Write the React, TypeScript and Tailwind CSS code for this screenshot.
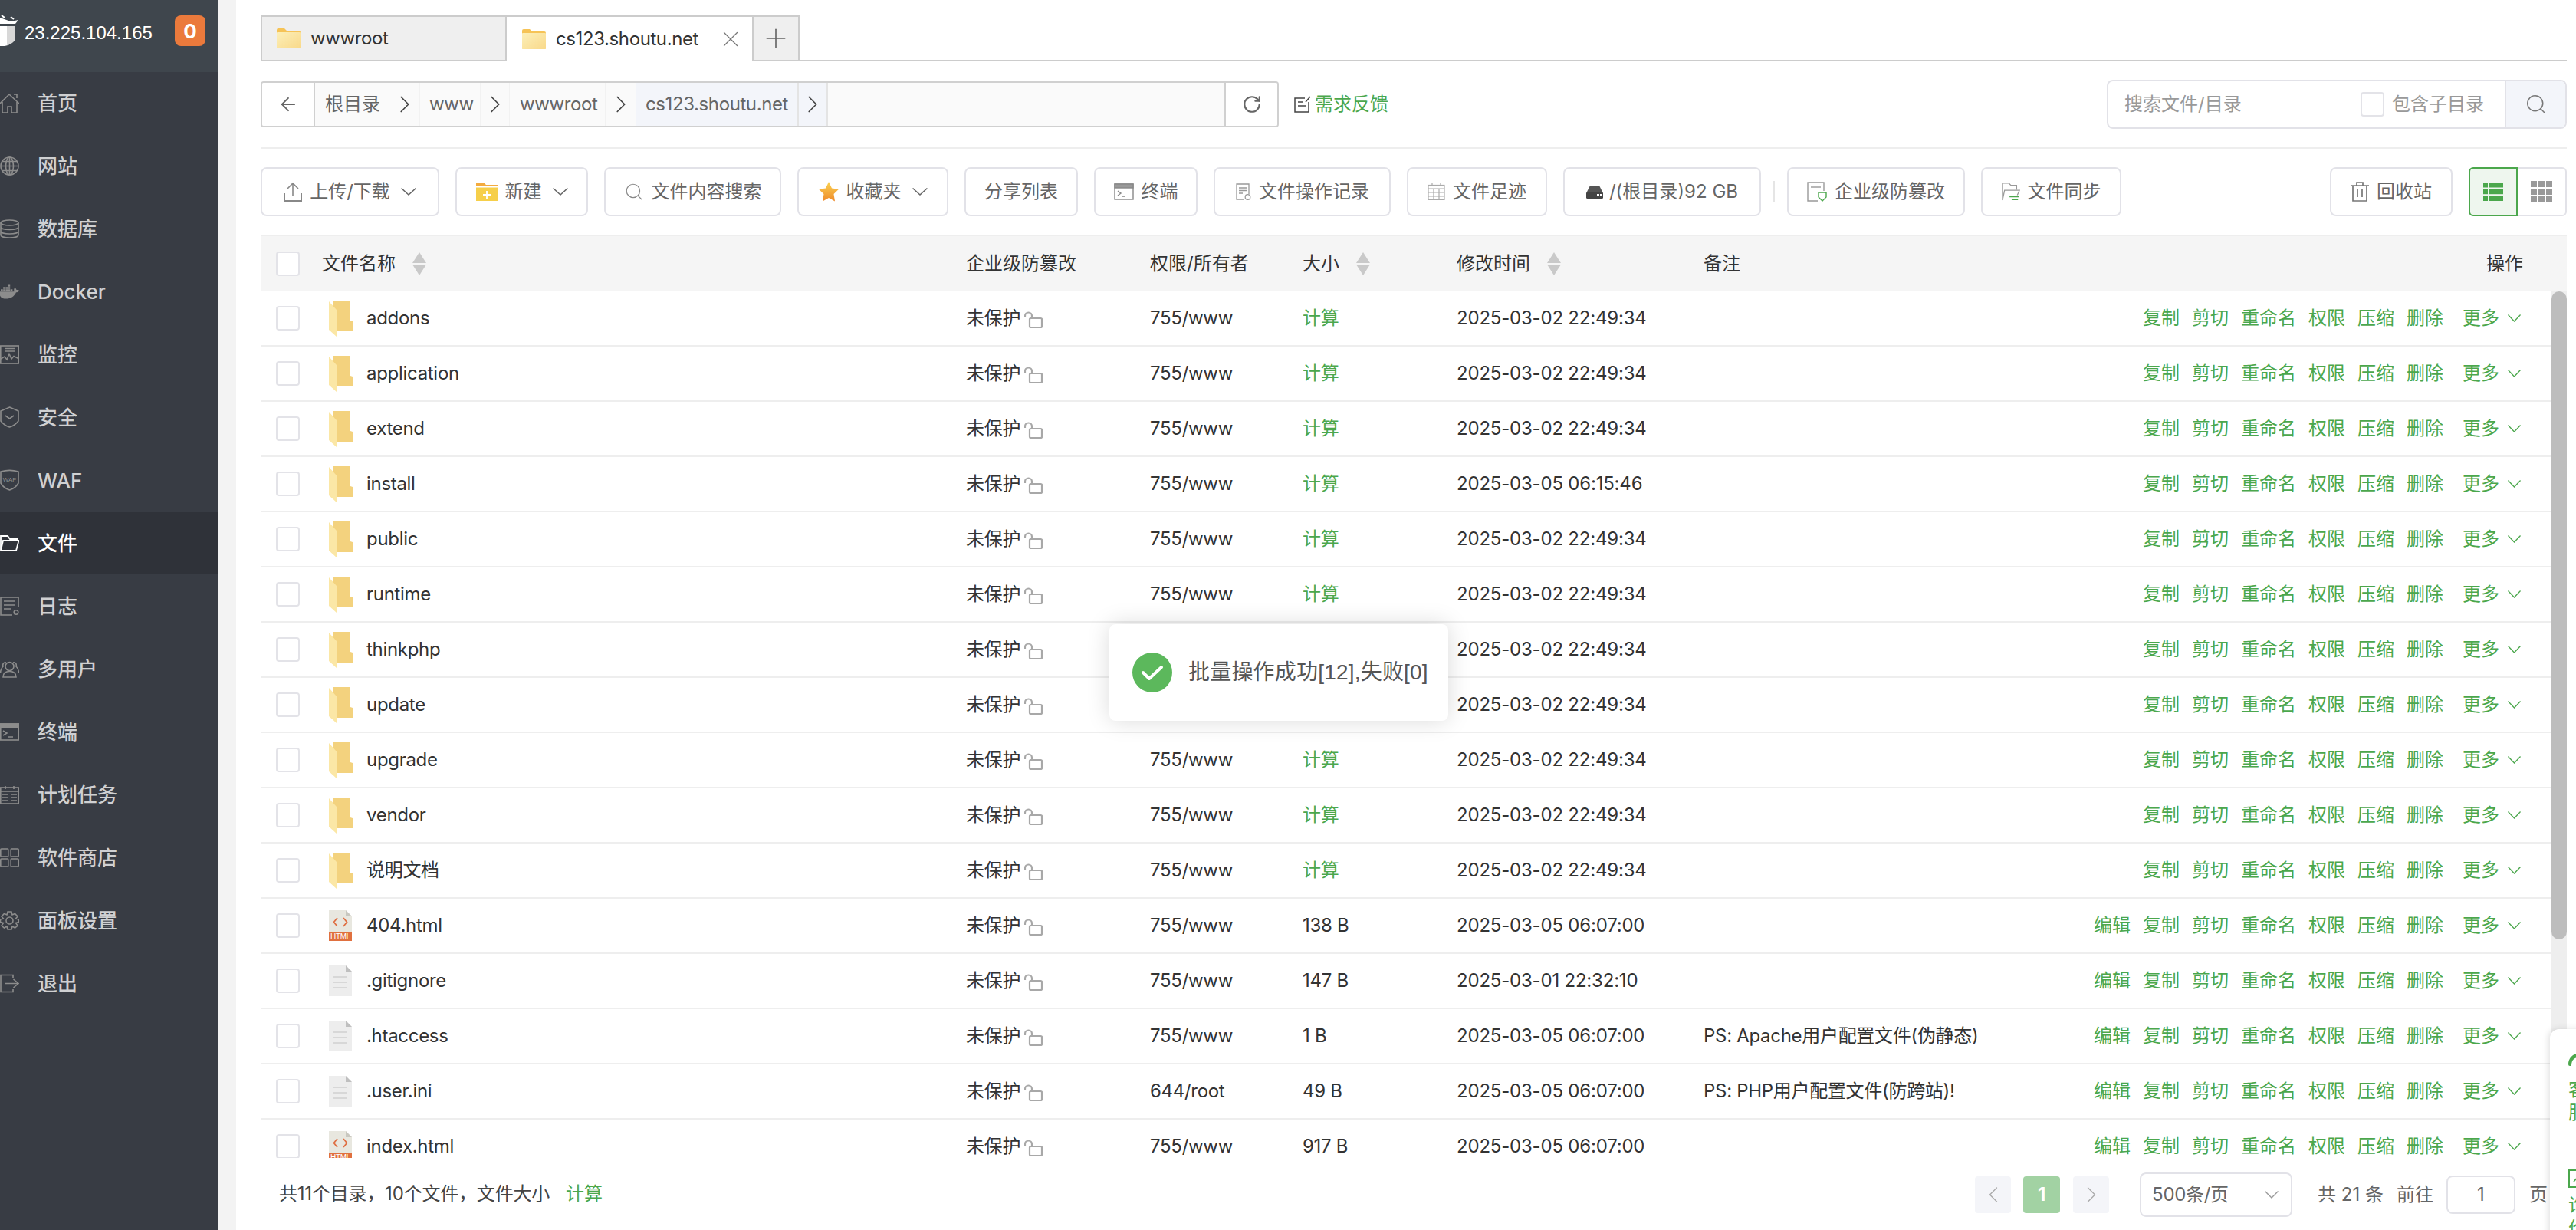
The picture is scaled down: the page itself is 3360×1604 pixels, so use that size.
import React from "react";
import { FaDocker } from "react-icons/fa";
import { RotateCw, ArrowLeft, ChevronRight, ChevronLeft, Search, X, Plus } from "lucide-react";

const G = "#8c8c8c";
const s = { fill: "none", stroke: G, strokeWidth: 1.6 };

const navIcons: Record<string, React.ReactNode> = {
  home: <svg width="25" height="27" viewBox="0 0 25 27" {...s}><path d="M0 14 L12 2 L25 14 M3 12 V26 H10 V18 H15 V26 H22 V12 M18 2 H22 V7" /></svg>,
  globe: <svg width="25" height="25" viewBox="0 0 25 25" {...s}><circle cx="12.5" cy="12.5" r="11.5" /><ellipse cx="12.5" cy="12.5" rx="5" ry="11.5" /><path d="M12.5 1V24M1 12.5H24M3 6.5H22M3 18.5H22" /></svg>,
  db: <svg width="25" height="25" viewBox="0 0 25 25" {...s}><ellipse cx="12.5" cy="4.5" rx="11.5" ry="3.5" /><path d="M1 4.5V20.5C1 22.5 6 24 12.5 24S24 22.5 24 20.5V4.5M1 10C1 12 6 13.5 12.5 13.5S24 12 24 10M1 15.5C1 17.5 6 19 12.5 19S24 17.5 24 15.5" /></svg>,
  docker: <FaDocker size={27} color={G} className="-ml-[1px]" />,
  monitor: <svg width="25" height="25" viewBox="0 0 25 25" {...s}><rect x="0.8" y="1" width="23.4" height="23" /><path d="M6 4.5H19M6 8H19M1 18L6 15L9 19L12 11.5L15 18L18 14.5L24 17.5" /></svg>,
  shield: <svg width="25" height="28" viewBox="0 0 25 28" {...s}><path d="M12.5 1L24 6V19C21 23 16 26 12.5 27C9 26 4 23 1 19V6Z" /><path d="M7 12L12.5 16L18 12" /></svg>,
  waf: <svg width="25" height="28" viewBox="0 0 25 28" {...s}><path d="M1 3C8 1 17 1 24 3V18C21 23 16 26 12.5 27C9 26 4 23 1 18Z" /><text x="12.5" y="16" fontSize="8" textAnchor="middle" fill={G} stroke="none" fontFamily="Liberation Sans">WAF</text></svg>,
  folder: <svg width="25" height="25" viewBox="0 0 25 25" fill="none" stroke="#fff" strokeWidth="1.8"><path d="M1 22V3H10L13 7H24M1 22H21L24.5 9H4L1 22Z" /></svg>,
  log: <svg width="25" height="25" viewBox="0 0 25 25" {...s}><path d="M24 14V1H1V24H16M5 6H20M5 11H20M5 16H14" /><circle cx="21" cy="20.5" r="2.8" /></svg>,
  users: <svg width="25" height="25" viewBox="0 0 25 25" {...s}><circle cx="12.5" cy="9" r="5.5" /><path d="M4 23C4 17 8 15.5 12.5 15.5S21 17 21 23H4ZM8 4C5 3 3 6 4 9C2 11 0.5 14 0.5 18M17 4C20 3 22 6 21 9C23 11 24.5 14 24.5 18" /></svg>,
  term: <svg width="25" height="25" viewBox="0 0 25 25" {...s}><rect x="0.8" y="2" width="23.4" height="21" /><rect x="0.8" y="2" width="23.4" height="5" fill={G} /><path d="M4 11L9 14L4 17M11 19H17" /></svg>,
  cal: <svg width="25" height="25" viewBox="0 0 25 25" {...s}><rect x="0.8" y="3" width="23.4" height="21" /><path d="M7 1V5M18 1V5M1 8H24M3 12H10M14 12H22M3 16H10M14 16H22M3 20H10M14 20H22" /></svg>,
  apps: <svg width="25" height="25" viewBox="0 0 25 25" {...s}><rect x="0.8" y="1" width="10" height="10" rx="1" /><rect x="14.2" y="1" width="10" height="10" rx="1" /><rect x="0.8" y="14" width="10" height="10" rx="1" /><rect x="14.2" y="14" width="10" height="10" rx="1" /></svg>,
  gear: <svg width="25" height="25" viewBox="0 0 25 25" {...s}><circle cx="12.5" cy="12.5" r="4.5" /><path d="M10 1H15L16 5L19.5 3.5L23 7L20.5 10L24.5 11V14.5L20.5 15.5L23 19L19.5 22L16 20L15 24H10L9 20L5.5 22L2 19L4.5 15.5L0.5 14.5V11L4.5 10L2 7L5.5 3.5L9 5Z" /></svg>,
  exit: <svg width="25" height="25" viewBox="0 0 25 25" {...s}><path d="M17 5V1.5H1V23.5H17V20M7 12.5H23M17.5 7L24 12.5L17.5 18" /></svg>,
};

const nav = [
  ["home", "首页"], ["globe", "网站"], ["db", "数据库"], ["docker", "Docker"], ["monitor", "监控"],
  ["shield", "安全"], ["waf", "WAF"], ["folder", "文件"], ["log", "日志"], ["users", "多用户"],
  ["term", "终端"], ["cal", "计划任务"], ["apps", "软件商店"], ["gear", "面板设置"], ["exit", "退出"],
];

const Chev = ({ w = 18, color = "#666", cls = "" }: { w?: number; color?: string; cls?: string }) => (
  <svg width={w} height={10} viewBox="0 0 18 10" preserveAspectRatio="none" fill="none" stroke={color} strokeWidth="1.4" className={`shrink-0 ${cls}`}>
    <path d="M0.5 0.5L9 9L17.5 0.5" />
  </svg>
);

const Logo = () => (
  <svg width="24" height="42" viewBox="0 0 24 42">
    <path d="M0 5L14 10L24 8L20 13H0Z" fill="#fff" />
    <path d="M2 2L6 5M14 4L18 7" stroke="#fff" strokeWidth="2" />
    <path d="M0 16H20V33C17 38 12 41 6 42H0Z" fill="#fff" />
    <path d="M9 16H20V33C17 38 13 40 9 41Z" fill="#d8d8d8" />
  </svg>
);

const TabFolder = () => (
  <svg width="31" height="26" viewBox="0 0 31 26">
    <defs><linearGradient id="tf" x1="0" y1="0" x2="1" y2="1"><stop offset="0" stopColor="#fcefb8" /><stop offset="1" stopColor="#f9d98a" /></linearGradient></defs>
    <path d="M0 2Q0 0 2 0H10L13 3H29Q31 3 31 5V24Q31 26 29 26H2Q0 26 0 24Z" fill="#f6c356" />
    <rect y="5" width="31" height="21" rx="1" fill="url(#tf)" />
  </svg>
);

const Folder = () => (
  <svg width="31" height="47" viewBox="0 0 31 47" className="shrink-0">
    <path d="M6 0H28V26L31 27V40H6Z" fill="#f3d27e" />
    <path d="M0 1L10 12V47L0 38Z" fill="#fbe7a6" />
  </svg>
);

const HtmlFile = () => (
  <svg width="30" height="40" viewBox="0 0 30 40" className="shrink-0">
    <path d="M0 0H22L30 8V28H0Z" fill="#e8e7df" />
    <path d="M22 0L30 8H22Z" fill="#c9c8c0" />
    <path d="M11 10L6.5 15.5L11 21M19 10L23.5 15.5L19 21" fill="none" stroke="#df6f43" strokeWidth="1.8" />
    <rect y="28" width="30" height="12" fill="#e0703f" />
    <text x="15" y="37.5" fontSize="10" fill="#fff" textAnchor="middle" fontFamily="Liberation Sans">HTML</text>
  </svg>
);

const PlainFile = () => (
  <svg width="30" height="40" viewBox="0 0 30 40" className="shrink-0">
    <path d="M0 0H22L30 8V40H0Z" fill="#ededed" />
    <path d="M22 0L30 8H22Z" fill="#bfbfbf" />
    <path d="M6 15H24M6 22H24M6 29H24" stroke="#d0d0d0" strokeWidth="1.6" />
  </svg>
);

const Sort = ({ ml }: { ml: string }) => (
  <svg width="18" height="30" viewBox="0 0 18 30" className={ml}>
    <path d="M9 0L18 14H0Z" fill="#c9c9c9" />
    <path d="M9 30L18 16H0Z" fill="#c9c9c9" />
  </svg>
);

const Lock = () => (
  <svg width="24" height="22" viewBox="0 0 24 22" fill="none" stroke="#a8a8a8" strokeWidth="2.2" className="ml-[5px] mt-[4px]">
    <path d="M1 8V6A4.5 4.5 0 0 1 10 6V9" />
    <rect x="7" y="9" width="16" height="12" rx="1.5" />
  </svg>
);

const Check = ({ extra = "" }: { extra?: string }) => (
  <div className={`w-[31px] h-[32px] rounded-[4px] border-2 border-[#e3e3e8] bg-white shrink-0 ${extra}`} />
);

const IUpload = () => <svg width="24" height="26" viewBox="0 0 24 26" fill="none" stroke="#888" strokeWidth="1.6"><path d="M12 19V2M5 9L12 2L19 9" /><path d="M1 15V25H23V15" strokeWidth="2" /></svg>;
const INew = () => <svg width="28" height="24" viewBox="0 0 28 24"><path d="M0 0H10L13 3H28V7H0Z" fill="#f3ab3f" /><rect y="5" width="28" height="19" fill="#f6cf4a" /><rect y="5" width="28" height="1.5" fill="#fff" /><path d="M14 11V21M9 16H19" stroke="#fff" strokeWidth="1.8" /></svg>;
const IStar = () => <svg width="26" height="26" viewBox="0 0 26 26"><defs><linearGradient id="st" x1="0" y1="0" x2="0" y2="1"><stop offset="0" stopColor="#fbd351" /><stop offset="1" stopColor="#ee8a2c" /></linearGradient></defs><path d="M13 0L17 8.5L26 9.8L19.5 16L21 25.5L13 21L5 25.5L6.5 16L0 9.8L9 8.5Z" fill="url(#st)" /></svg>;
const ITerm = () => <svg width="26" height="22" viewBox="0 0 26 22" fill="none" stroke="#888" strokeWidth="1.4"><rect x="1" y="1" width="24" height="20" /><rect x="1" y="1" width="24" height="5" fill="#999" /><path d="M5 10L9 13L5 16M11 17H15" /></svg>;
const IDocClock = () => <svg width="21" height="22" viewBox="0 0 21 22" fill="none" stroke="#999" strokeWidth="1.3"><path d="M12 21H2V1H18V14" /><path d="M5 6H15M5 9.5H15M5 13H10" /><circle cx="16.5" cy="18" r="3.3" /></svg>;
const ICal = () => <svg width="23" height="22" viewBox="0 0 23 22" fill="none" stroke="#aaa" strokeWidth="1.2"><rect x="1" y="2.5" width="21" height="19" /><path d="M6 0V4M17 0V4M1 7H22M1 12H22M1 17H22M8 7V21M15 7V21" /></svg>;
const IDisk = () => <svg width="22" height="17" viewBox="0 0 22 17"><path d="M5 0H17L21 8H1Z" fill="#555" /><rect x="0" y="8.5" width="22" height="8.5" rx="1.5" fill="#444" /><rect x="14" y="11" width="3" height="3" fill="#fff" /><rect x="18" y="11" width="2" height="3" fill="#fff" /></svg>;
const IShieldDoc = () => <svg width="26" height="26" viewBox="0 0 26 26" fill="none" stroke="#999" strokeWidth="1.4"><path d="M14 25H1V1H22V12" /><path d="M5 7H18" /><path d="M15 14H25V20L20 25L15 20Z" stroke="#4ba74c" /></svg>;
const ISync = () => <svg width="24" height="24" viewBox="0 0 26 26" fill="none" stroke="#999" strokeWidth="1.4"><path d="M1 25V1H10L13 4H21V10M1 25L4 11H25L22 18" /><path d="M11 20H24M14 24H23" stroke="#4ba74c" strokeWidth="1.8" /></svg>;
const ITrash = () => <svg width="24" height="26" viewBox="0 0 24 26" fill="none" stroke="#777" strokeWidth="1.7"><path d="M0 5H24M8 5V1H16V5M3 5V25H21V5M9 10V20M15 10V20" /></svg>;

function Btn({ w, icon, label, chev, gap = "gap-[10px]" }: { w: string; icon?: React.ReactNode; label: string; chev?: boolean; gap?: string }) {
  return (
    <div className={`${w} h-[64px] shrink-0 flex items-center justify-center ${gap} rounded-[8px] border-2 border-[#e2e2e8] text-[24px] text-[#666] bg-white`}>
      {icon}
      <span className="whitespace-nowrap">{label}</span>
      {chev && <Chev w={20} cls="ml-[4px]" />}
    </div>
  );
}

type Row = { name: string; kind: "dir" | "html" | "file"; perm: string; size: string; date: string; note?: string };
const D1 = "2025-03-02 22:49:34";
const rows: Row[] = [
  ...["addons", "application", "extend"].map((name) => ({ name, kind: "dir" as const, perm: "755/www", size: "计算", date: D1 })),
  { name: "install", kind: "dir", perm: "755/www", size: "计算", date: "2025-03-05 06:15:46" },
  ...["public", "runtime", "thinkphp", "update", "upgrade", "vendor", "说明文档"].map((name) => ({ name, kind: "dir" as const, perm: "755/www", size: "计算", date: D1 })),
  { name: "404.html", kind: "html", perm: "755/www", size: "138 B", date: "2025-03-05 06:07:00" },
  { name: ".gitignore", kind: "file", perm: "755/www", size: "147 B", date: "2025-03-01 22:32:10" },
  { name: ".htaccess", kind: "file", perm: "755/www", size: "1 B", date: "2025-03-05 06:07:00", note: "PS: Apache用户配置文件(伪静态)" },
  { name: ".user.ini", kind: "file", perm: "644/root", size: "49 B", date: "2025-03-05 06:07:00", note: "PS: PHP用户配置文件(防跨站)!" },
  { name: "index.html", kind: "html", perm: "755/www", size: "917 B", date: "2025-03-05 06:07:00" },
];

const acts = ["复制", "剪切", "重命名", "权限", "压缩", "删除"];

function FileRow({ r }: { r: Row }) {
  return (
    <div className="h-[72px] shrink-0 flex items-center border-b-2 border-[#eeeeee] text-[24px] text-[#333] tracking-[-0.3px]">
      <div className="w-[89px] pl-[20px] shrink-0"><Check /></div>
      <div className="w-[49px] shrink-0 flex items-center">
        {r.kind === "dir" ? <Folder /> : r.kind === "html" ? <HtmlFile /> : <PlainFile />}
      </div>
      <div className="w-[782px] shrink-0 whitespace-nowrap">{r.name}</div>
      <div className="w-[240px] shrink-0 flex items-center"><span>未保护</span><Lock /></div>
      <div className="w-[199px] shrink-0">{r.perm}</div>
      <div className={`w-[201px] shrink-0 ${r.kind === "dir" ? "text-[#4ba74c]" : ""}`}>{r.size}</div>
      <div className="w-[322px] shrink-0 whitespace-nowrap tracking-[-0.2px]">{r.date}</div>
      <div className="flex-1 whitespace-nowrap">{r.note}</div>
      <div className="flex items-center justify-end pr-[40px] text-[#4ba74c] gap-[16px] tracking-normal">
        {r.kind !== "dir" && <span>编辑</span>}
        {acts.map((a) => <span key={a}>{a}</span>)}
        <span className="ml-[9px] flex items-center gap-[11px]">更多<Chev w={17} color="#4ba74c" /></span>
      </div>
    </div>
  );
}

const Crumb = () => <ChevronRight size={38} strokeWidth={1.1} color="#444" className="shrink-0" />;

export default function App() {
  return (
    <div className="relative w-[3360px] h-[1604px] overflow-hidden flex bg-white [font-family:Inter,'Noto_Sans_CJK_SC',sans-serif]">
      {/* sidebar */}
      <aside className="w-[284px] shrink-0 bg-[#383c44] flex flex-col">
        <div className="h-[94px] bg-[#3f464d] flex items-start pt-[18px] relative shrink-0">
          <Logo />
          <span className="ml-[8px] mt-[7px] text-[24px] text-white whitespace-nowrap [font-family:'Liberation_Sans',sans-serif]">23.225.104.165</span>
          <span className="ml-auto mr-[16px] mt-[2px] w-[40px] h-[40px] rounded-[8px] bg-[#eb7a3c] text-white text-[26px] font-bold flex items-center justify-center">0</span>
        </div>
        <nav className="-mt-[1px]">
          {nav.map(([ic, label]) => (
            <div key={label} className={`h-[82px] flex items-center ${label === "文件" ? "bg-[#2f3239] text-white border-y border-[#383c44]" : "text-[#cfd0d2]"}`}>
              <span className="w-[25px] shrink-0 flex justify-center">{navIcons[ic]}</span>
              <span className="ml-[24px] text-[26px] font-medium whitespace-nowrap">{label}</span>
            </div>
          ))}
        </nav>
      </aside>
      <div className="w-[24px] shrink-0 bg-[#f3f3f3]" />

      {/* main */}
      <main className="flex-1 min-w-0 pl-[32px] pr-[12px]">
        {/* tabs */}
        <div className="mt-[20px] h-[60px] flex border-b-2 border-[#cccccc] text-[24px] text-[#333]">
          <div className="w-[321px] h-[60px] shrink-0 border-2 border-[#cccccc] bg-[#efefef] flex items-center pl-[19px] gap-[13px]">
            <TabFolder /><span className="tracking-[-0.4px]">wwwroot</span>
          </div>
          <div className="w-[320px] h-[60px] shrink-0 border-t-2 border-[#cccccc] bg-white flex items-center pl-[20px] gap-[13px]">
            <TabFolder /><span className="tracking-[-0.4px]">cs123.shoutu.net</span>
            <X size={34} strokeWidth={0.9} color="#777" className="ml-[12px]" />
          </div>
          <div className="w-[62px] h-[60px] shrink-0 border-2 border-[#cccccc] bg-[#efefef] flex items-center justify-center">
            <Plus size={40} strokeWidth={1} color="#666" />
          </div>
        </div>

        {/* path row */}
        <div className="mt-[24px] h-[64px] flex items-center justify-between">
          <div className="flex items-center">
            <div className="w-[1328px] h-[60px] flex border-2 border-[#d0d0d0] rounded-[4px] text-[24px] text-[#666] overflow-hidden bg-[#fafafa]">
              <div className="w-[69px] bg-white border-r-2 border-[#d0d0d0] flex items-center justify-center"><ArrowLeft size={28} strokeWidth={1.6} color="#666" /></div>
              <div className="w-[97px] pl-[13px] flex items-center border-r border-[#f2f2f2]">根目录</div>
              <div className="w-[40px] flex items-center justify-center border-r border-[#f2f2f2]"><Crumb /></div>
              <div className="w-[79px] pl-[12px] flex items-center border-r border-[#f2f2f2] tracking-[-0.4px]">www</div>
              <div className="w-[38px] flex items-center justify-center border-r border-[#f2f2f2]"><Crumb /></div>
              <div className="w-[125px] pl-[13px] flex items-center border-r border-[#f2f2f2] tracking-[-0.4px]">wwwroot</div>
              <div className="w-[40px] flex items-center justify-center"><Crumb /></div>
              <div className="w-[212px] pl-[12px] bg-[#f3f5fa] flex items-center border-r-2 border-[#e4e4e4] tracking-[-0.4px]">cs123.shoutu.net</div>
              <div className="w-[38px] bg-[#f3f5fa] flex items-center justify-center border-r-2 border-[#e4e4e4]"><Crumb /></div>
              <div className="flex-1 border-r-2 border-[#d0d0d0]" />
              <div className="w-[67px] bg-white flex items-center justify-center"><RotateCw size={26} strokeWidth={2} color="#666" /></div>
            </div>
            <svg width="22" height="22" viewBox="0 0 22 22" fill="none" stroke="#444" strokeWidth="1.5" className="ml-[20px]"><path d="M14 3H1V21H19V8M5 8H12M5 13H15M15 8L21 1" /></svg>
            <span className="ml-[5px] text-[24px] text-[#4ba74c]">需求反馈</span>
          </div>
          <div className="w-[600px] h-[64px] flex items-center border-2 border-[#e2e2e8] rounded-[8px] text-[24px] text-[#999]">
            <span className="ml-[21px]">搜索文件/目录</span>
            <Check extra="ml-auto" />
            <span className="ml-[10px] mr-[27px]">包含子目录</span>
            <div className="w-[79px] h-full bg-[#f3f5fa] border-l-2 border-[#e2e2e8] rounded-r-[6px] flex items-center justify-center"><Search size={30} strokeWidth={1.2} color="#777" /></div>
          </div>
        </div>
        <div className="mt-[24px] h-[2px] bg-[#eeeeee]" />

        {/* toolbar */}
        <div className="mt-[24px] h-[64px] flex items-center gap-[21px]">
          <Btn w="w-[233px]" icon={<IUpload />} label="上传/下载" chev />
          <Btn w="w-[173px]" icon={<INew />} label="新建" chev />
          <Btn w="w-[231px]" icon={<Search size={26} strokeWidth={1.1} color="#888" />} label="文件内容搜索" />
          <Btn w="w-[197px]" icon={<IStar />} label="收藏夹" chev />
          <Btn w="w-[148px]" label="分享列表" />
          <Btn w="w-[135px]" icon={<ITerm />} label="终端" />
          <Btn w="w-[231px]" icon={<IDocClock />} label="文件操作记录" />
          <Btn w="w-[183px]" icon={<ICal />} label="文件足迹" />
          <Btn w="w-[258px]" icon={<IDisk />} label="/(根目录)92 GB" gap="gap-[8px]" />
          <div className="w-[2px] h-[28px] bg-[#e5e5e5] -mx-[5px]" />
          <Btn w="w-[232px]" icon={<IShieldDoc />} label="企业级防篡改" />
          <Btn w="w-[183px]" icon={<ISync />} label="文件同步" />
          <div className="ml-auto" />
          <Btn w="w-[160px]" icon={<ITrash />} label="回收站" />
          <div className="flex h-[64px]">
            <div className="w-[64px] bg-[#eef6ee] border-2 border-[#4ba74c] rounded-l-[6px] flex items-center justify-center">
              <svg width="26" height="24" viewBox="0 0 26 24" fill="#4ba74c"><rect width="6" height="6.5" /><rect x="8" width="18" height="6.5" /><rect y="8.7" width="6" height="6.5" /><rect x="8" y="8.7" width="18" height="6.5" /><rect y="17.5" width="6" height="6.5" /><rect x="8" y="17.5" width="18" height="6.5" /></svg>
            </div>
            <div className="w-[64px] border-y-2 border-r-2 border-[#e2e2e8] rounded-r-[6px] flex items-center justify-center">
              <svg width="28" height="28" viewBox="0 0 28 28" fill="#999"><rect width="8" height="8" /><rect x="10" width="8" height="8" /><rect x="20" width="8" height="8" /><rect y="10" width="8" height="8" /><rect x="10" y="10" width="8" height="8" /><rect x="20" y="10" width="8" height="8" /><rect y="20" width="8" height="8" /><rect x="10" y="20" width="8" height="8" /><rect x="20" y="20" width="8" height="8" /></svg>
            </div>
          </div>
        </div>

        {/* table header */}
        <div className="mt-[24px] h-[74px] bg-[#f5f5f5] border-t-2 border-[#eeeeee] flex items-center text-[24px] text-[#333]">
          <div className="w-[80px] pl-[20px] shrink-0"><Check /></div>
          <div className="w-[840px] shrink-0 flex items-center">文件名称<Sort ml="ml-[22px]" /></div>
          <div className="w-[240px] shrink-0">企业级防篡改</div>
          <div className="w-[199px] shrink-0">权限/所有者</div>
          <div className="w-[201px] shrink-0 flex items-center">大小<Sort ml="ml-[22px]" /></div>
          <div className="w-[322px] shrink-0 flex items-center">修改时间<Sort ml="ml-[22px]" /></div>
          <div className="flex-1">备注</div>
          <div className="pr-[57px]">操作</div>
        </div>

        {/* rows */}
        <div className="h-[1130px] flex overflow-hidden">
          <div className="flex-1 min-w-0 flex flex-col">
            {rows.map((r) => <FileRow key={r.name} r={r} />)}
          </div>
          <div className="w-[20px] shrink-0 bg-[#eeeeee]">
            <div className="h-[845px] bg-[#bdbdbd] rounded-[10px]" />
          </div>
        </div>

        {/* footer */}
        <div className="h-[94px] flex items-center text-[24px] text-[#555] pr-[25px]">
          <span className="ml-[24px] text-[#444] tracking-[-0.2px]">共11个目录，10个文件，文件大小</span>
          <span className="ml-[21px] text-[#4ba74c]">计算</span>
          <div className="ml-auto mt-[2px] flex items-center">
            <div className="w-[47px] h-[48px] rounded-[4px] bg-[#f4f5f9] flex items-center justify-center"><ChevronLeft size={36} strokeWidth={0.9} color="#aaa" /></div>
            <div className="ml-[16px] w-[48px] h-[48px] rounded-[4px] bg-[#a2d2a3] text-white font-bold flex items-center justify-center">1</div>
            <div className="ml-[17px] w-[47px] h-[48px] rounded-[4px] bg-[#f4f5f9] flex items-center justify-center"><ChevronRight size={36} strokeWidth={0.9} color="#aaa" /></div>
            <div className="ml-[40px] w-[199px] h-[58px] rounded-[8px] border-2 border-[#e2e2e8] flex items-center pl-[14px] pr-[16px] justify-between text-[#666]">
              <span className="tracking-[-0.3px]">500条/页</span><Chev w={18} color="#999" />
            </div>
            <span className="ml-[33px] text-[#666]">共 21 条</span>
            <span className="ml-[17px] text-[#666]">前往</span>
            <div className="ml-[17px] w-[90px] h-[50px] rounded-[8px] border-2 border-[#e2e2e8] flex items-center justify-center text-[#666]">1</div>
            <span className="ml-[18px] text-[#666]">页</span>
          </div>
        </div>
      </main>

      {/* toast */}
      <div className="absolute left-[1447px] top-[814px] w-[442px] h-[126px] rounded-[8px] bg-white shadow-[0_0_30px_rgba(0,0,0,0.15)] flex items-center pl-[30px]">
        <div className="w-[52px] h-[52px] rounded-full bg-[#5cb85c] flex items-center justify-center">
          <svg width="30" height="22" viewBox="0 0 30 22" fill="none" stroke="#fff" strokeWidth="4" strokeLinecap="round" strokeLinejoin="round"><path d="M3 11L11 19L27 4" /></svg>
        </div>
        <span className="ml-[21px] text-[28px] text-[#555] whitespace-nowrap tracking-[0.2px] [font-family:'Liberation_Sans','Noto_Sans_CJK_SC',sans-serif]">批量操作成功[12],失败[0]</span>
      </div>

      {/* floating service widget */}
      <div className="absolute left-[3326px] top-[1342px] w-[60px] h-[280px] rounded-tl-[12px] bg-white shadow-[-2px_0_8px_rgba(0,0,0,0.12)] pl-[24px] text-[#4ba74c] text-[24px] leading-[30px]">
        <svg width="26" height="24" viewBox="0 0 26 24" className="block mt-[32px]" fill="#4ba74c"><path d="M0 14C0 6 6 0 13 0S26 6 26 14H22C22 8 18 5 13 5S4 8 4 16H2Q0 16 0 14Z" /></svg>
        <div className="mt-[8px]">客</div>
        <div>服</div>
        <div className="mt-[59px] w-[26px] h-[24px] border-2 border-[#4ba74c] flex items-center justify-center">
          <svg width="14" height="12" viewBox="0 0 14 12" fill="none" stroke="#4ba74c" strokeWidth="1.6"><path d="M1 10L7 3L10 7" /></svg>
        </div>
        <div className="mt-[8px]">询</div>
        <div>价</div>
      </div>
    </div>
  );
}
